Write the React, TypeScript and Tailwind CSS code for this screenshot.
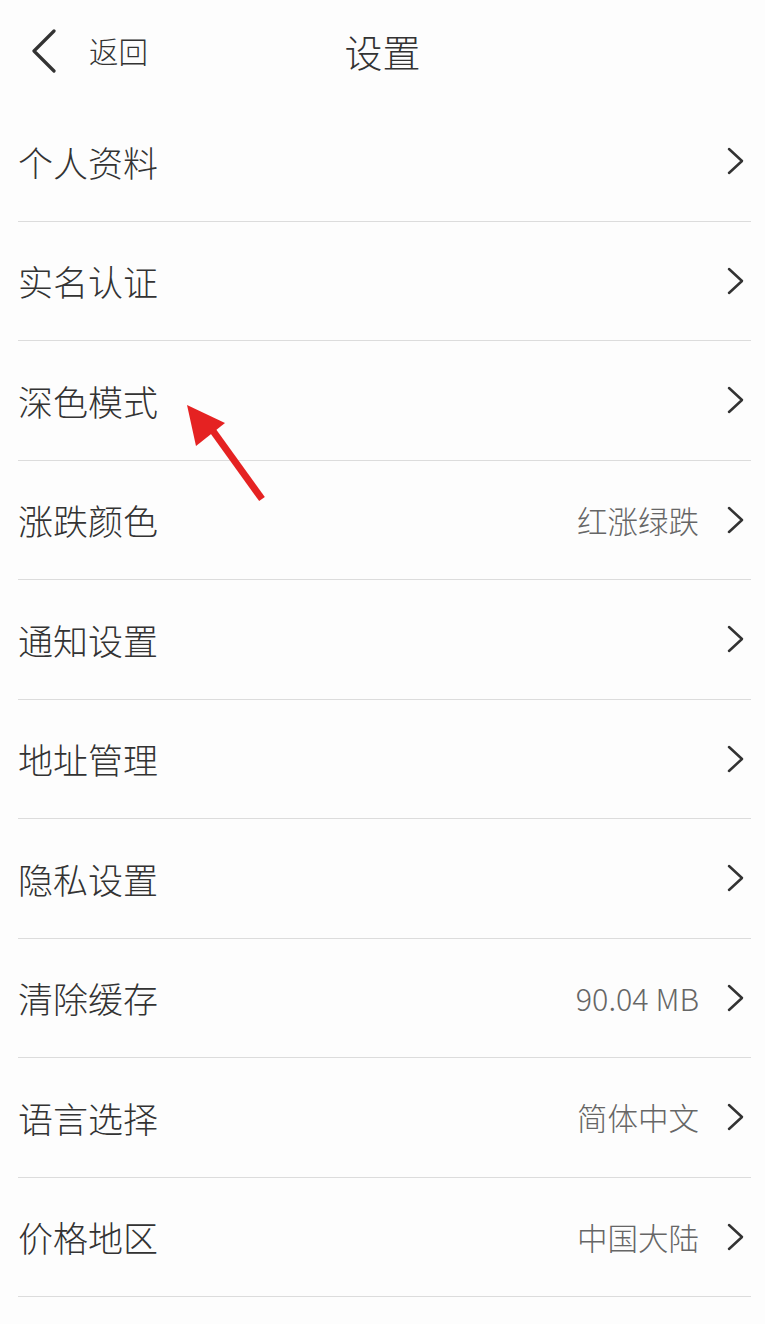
import React from "react";

const rows: { label: string; value?: string }[] = [
  { label: "个人资料" },
  { label: "实名认证" },
  { label: "深色模式" },
  { label: "涨跌颜色", value: "红涨绿跌" },
  { label: "通知设置" },
  { label: "地址管理" },
  { label: "隐私设置" },
  { label: "清除缓存", value: "90.04 MB" },
  { label: "语言选择", value: "简体中文" },
  { label: "价格地区", value: "中国大陆" },
];

function ChevronRight() {
  return (
    <svg width="20" height="28" viewBox="0 0 20 28" fill="none">
      <path d="M3 2 L16 14 L3 26" stroke="#333" strokeWidth="2.5" strokeLinecap="round" strokeLinejoin="round" />
    </svg>
  );
}

export default function App() {
  return (
    <div
      className="relative w-[765px] h-[1324px] bg-[#fdfdfd] overflow-hidden font-light"
      style={{ fontFamily: '"Noto Sans CJK SC", "Noto Sans", sans-serif' }}
    >
      <div className="relative h-[102px] flex items-center">
        <div className="flex items-center pl-[31px]">
          <svg width="26" height="44" viewBox="0 0 26 44" fill="none">
            <path d="M23 2 L3 22 L23 42" stroke="#333" strokeWidth="3.2" strokeLinecap="round" strokeLinejoin="round" />
          </svg>
          <span className="ml-[32px] text-[29.5px] text-[#333] leading-none">返回</span>
        </div>
        <div className="absolute left-0 right-0 top-0 h-[102px] flex items-center justify-center pointer-events-none">
          <span className="text-[38px] text-[#333] leading-none">设置</span>
        </div>
      </div>
      <div className="ml-[18px] mr-[14px]">
        {rows.map((r) => (
          <div key={r.label} className="h-[119.5px] flex items-center border-b border-[#dcdcdc]">
            <span className="text-[35px] text-[#333] leading-none">{r.label}</span>
            <div className="ml-auto flex items-center pr-[5px]">
              {r.value && (
                <span className="text-[30.5px] text-[#666] leading-none mr-[27px]">{r.value}</span>
              )}
              <ChevronRight />
            </div>
          </div>
        ))}
      </div>
      <svg className="absolute left-0 top-0" width="765" height="1324" viewBox="0 0 765 1324" fill="none">
        <line x1="262" y1="499" x2="213" y2="431" stroke="#e52222" strokeWidth="7" strokeLinecap="butt" />
        <polygon points="187,405 225,423 196,446" fill="#e52222" />
      </svg>
    </div>
  );
}
